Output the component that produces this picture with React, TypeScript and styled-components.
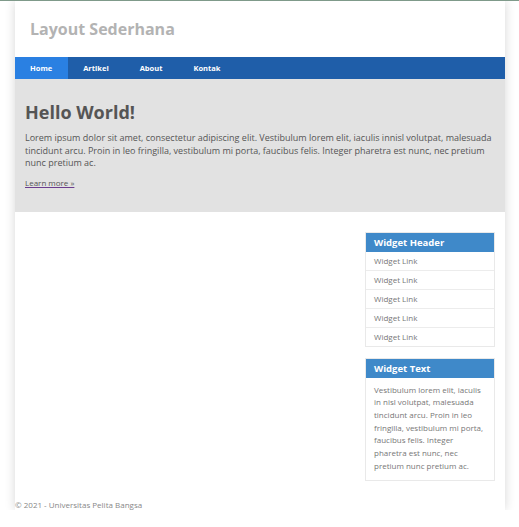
import React from "react";
import styled, { createGlobalStyle } from "styled-components";

const Global = createGlobalStyle`
  html, body { margin: 0; padding: 0; background: #fff; }
  body {
    border-top: 1px solid #7f9a8a;
    font-family: "Open Sans", "DejaVu Sans", sans-serif;
  }
`;

const Container = styled.div`
  width: 490px;
  margin: 0 15px;
  background: #fff;
  box-shadow: 0 0 10px rgba(0, 0, 0, 0.16);
  display: flex;
  flex-direction: column;
`;

const Header = styled.header`
  height: 56px;
  display: flex;
  align-items: center;
  padding-left: 15px;
`;

const Title = styled.h1`
  margin: 0;
  font-size: 16px;
  font-weight: 700;
  color: #b3b3b3;
`;

const Nav = styled.nav`
  display: flex;
  height: 22px;
  background: #1f5ea9;
`;

const NavItem = styled.a<{ $active?: boolean }>`
  display: block;
  padding: 0 16px 0 15px;
  line-height: 22px;
  font-size: 7.5px;
  font-weight: 700;
  color: #fff;
  text-decoration: none;
  background: ${(p) => (p.$active ? "#2a80e2" : "transparent")};
`;

const Hero = styled.section`
  background: #e2e2e2;
  padding: 21px 10px 23px;
`;

const HeroTitle = styled.h2`
  margin: 0 0 8px;
  font-size: 18px;
  line-height: 24px;
  font-weight: 700;
  color: #555;
`;

const HeroText = styled.p`
  margin: 0 0 7px;
  font-size: 9px;
  line-height: 12.5px;
  color: #555;
`;

const MoreLine = styled.p`
  margin: 0;
  font-size: 8px;
  line-height: 12px;
`;

const LearnMore = styled.a`
  color: #555;
  text-decoration: underline;
  text-decoration-color: #6b3d8e;
`;

const Main = styled.div`
  display: flex;
  justify-content: flex-end;
  padding: 20px 10px 0;
`;

const Sidebar = styled.aside`
  width: 130px;
  display: flex;
  flex-direction: column;
  gap: 11px;
`;

const Widget = styled.div`
  border: 1px solid #e9e9e9;
  background: #fff;
`;

const WidgetHeader = styled.div`
  background: #3f89c9;
  color: #fff;
  font-size: 9.5px;
  font-weight: 700;
  height: 19px;
  line-height: 19px;
  padding: 0 8px;
`;

const WidgetLink = styled.a`
  display: block;
  height: 18px;
  line-height: 18px;
  padding: 0 8px;
  font-size: 8px;
  color: #777;
  text-decoration: none;
  border-top: 1px solid #ececec;
  &:first-of-type { border-top: none; }
`;

const WidgetBody = styled.p`
  margin: 0;
  padding: 6px 8px 8px;
  font-size: 8px;
  line-height: 12.7px;
  color: #777;
`;

const Footer = styled.footer`
  margin-top: 18px;
  font-size: 8px;
  line-height: 11px;
  color: #888;
`;

export default function App() {
  return (
    <>
      <Global />
      <Container>
        <Header>
          <Title>Layout Sederhana</Title>
        </Header>
        <Nav>
          <NavItem $active>Home</NavItem>
          <NavItem>Artikel</NavItem>
          <NavItem>About</NavItem>
          <NavItem>Kontak</NavItem>
        </Nav>
        <Hero>
          <HeroTitle>Hello World!</HeroTitle>
          <HeroText>
            Lorem ipsum dolor sit amet, consectetur adipiscing elit. Vestibulum lorem elit, iaculis innisl volutpat,
            malesuada tincidunt arcu. Proin in leo fringilla, vestibulum mi porta, faucibus felis. Integer pharetra est
            nunc, nec pretium nunc pretium ac.
          </HeroText>
          <MoreLine>
            <LearnMore href="#">Learn more »</LearnMore>
          </MoreLine>
        </Hero>
        <Main>
          <Sidebar>
            <Widget>
              <WidgetHeader>Widget Header</WidgetHeader>
              <WidgetLink>Widget Link</WidgetLink>
              <WidgetLink>Widget Link</WidgetLink>
              <WidgetLink>Widget Link</WidgetLink>
              <WidgetLink>Widget Link</WidgetLink>
              <WidgetLink>Widget Link</WidgetLink>
            </Widget>
            <Widget>
              <WidgetHeader>Widget Text</WidgetHeader>
              <WidgetBody>
                Vestibulum lorem elit, iaculis in nisl volutpat, malesuada tincidunt arcu. Proin in leo fringilla,
                vestibulum mi porta, faucibus felis. Integer pharetra est nunc, nec pretium nunc pretium ac.
              </WidgetBody>
            </Widget>
          </Sidebar>
        </Main>
        <Footer>© 2021 - Universitas Pelita Bangsa</Footer>
      </Container>
    </>
  );
}
